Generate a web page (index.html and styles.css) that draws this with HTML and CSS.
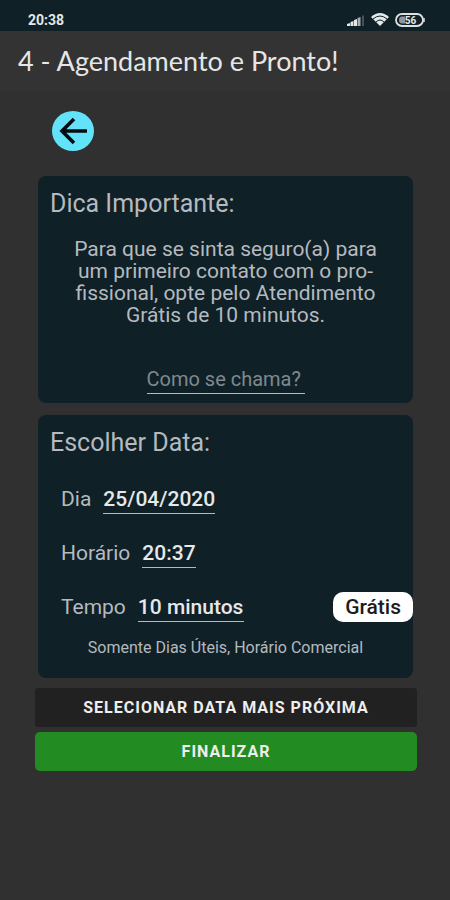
FILE: index.html
```html
<!DOCTYPE html>
<html lang="pt-BR">
<head>
<meta charset="utf-8">
<meta name="viewport" content="width=device-width, initial-scale=1">
<title>Agendamento</title>
<link rel="stylesheet" href="styles.css">
</head>
<body>
  <div class="status">
    <span class="clock">20:38</span>
    <div class="status-icons">
      <svg width="18" height="12" viewBox="0 0 18 12">
        <path d="M0 12V10L3 9V12zM3.5 12V8L6.5 7V12zM7 12V6L10 5V12z" fill="#e4e8e9"/>
        <path d="M10.5 12V4L13.5 3V12z" fill="#a5adb0"/>
        <path d="M15 12V2L17 1V12z" fill="#435157"/>
      </svg>
      <svg width="18" height="13" viewBox="0 0 18 13">
        <path d="M9 13L0 4Q9 -4 18 4z" fill="#e4e8e9"/>
        <path d="M2 6Q9 0 16 6M5 9Q9 5 13 9" fill="none" stroke="#102027" stroke-width="1"/>
      </svg>
      <svg width="30" height="14" viewBox="0 0 30 14">
        <rect x="1" y="1" width="27" height="12" rx="6" fill="none" stroke="#dde1e2" stroke-width="1.8"/>
        <path d="M10 3.5H7Q4 3.5 4 7T7 10.5H10z" fill="#8d979b"/>
        <path d="M29 5V9" stroke="#dde1e2" stroke-width="1.5"/>
        <text x="15.5" y="10.5" class="battery-level">56</text>
      </svg>
    </div>
  </div>

  <header class="app-bar">
    <h1>4 - Agendamento e Pronto!</h1>
  </header>

  <main>
    <button type="button" class="back" aria-label="Voltar">
      <svg width="42" height="40" viewBox="0 0 42 40">
        <path d="M35 20H10M22 8L10 20L22 32" fill="none" stroke="#050c0f" stroke-width="3.6"/>
      </svg>
    </button>

    <form>
      <section class="card card-tip">
        <h2>Dica Importante:</h2>
        <p class="tip">Para que se sinta seguro(a) para<br>um primeiro contato com o pro-<br>fissional, opte pelo Atendimento<br>Grátis de 10 minutos.</p>
        <input type="text" class="field name" placeholder="Como se chama?" aria-label="Como se chama?">
      </section>

      <section class="card card-date">
        <h2>Escolher Data:</h2>
        <div class="row">
          <label for="dia">Dia</label>
          <input type="text" id="dia" class="field date" value="25/04/2020">
        </div>
        <div class="row">
          <label for="horario">Horário</label>
          <input type="text" id="horario" class="field time" value="20:37">
        </div>
        <div class="row">
          <label for="tempo">Tempo</label>
          <input type="text" id="tempo" class="field length" value="10 minutos">
          <span class="badge">Grátis</span>
        </div>
        <p class="note">Somente Dias Úteis, Horário Comercial</p>
      </section>

      <div class="actions">
        <button type="button" class="btn btn-next">SELECIONAR DATA MAIS PRÓXIMA</button>
        <button type="submit" class="btn btn-finish">FINALIZAR</button>
      </div>
    </form>
  </main>
</body>
</html>
```

FILE: styles.css
```css
* {
  box-sizing: border-box;
}
body {
  margin: 0;
  min-height: 100vh;
  background: #303030;
  color: #b4babf;
  font-family: Roboto, sans-serif;
}
h1, h2, p {
  margin: 0;
}
.status {
  display: flex;
  align-items: center;
  justify-content: space-between;
  height: 31px;
  padding: 8px 25px 0 28px;
  background: #102027;
}
.clock {
  color: #e4e8e9;
  font-size: 14px;
  font-weight: 700;
}
.status-icons {
  display: flex;
  align-items: center;
  gap: 6px;
}
.battery-level {
  fill: #e4e8e9;
  font-size: 10px;
  font-weight: 700;
  text-anchor: middle;
}
.app-bar {
  height: 60px;
  padding: 0 18px;
  background: #343334;
}
h1 {
  color: #e6e6e6;
  font-family: Lato, sans-serif;
  font-size: 27px;
  font-weight: 400;
  line-height: 60px;
}
main {
  padding: 20px 33px 0 35px;
}
.back {
  display: block;
  width: 42px;
  height: 40px;
  margin: 0 0 25px 17px;
  padding: 0;
  border: 0;
  border-radius: 50%;
  background: #62e3fa;
}
.back svg {
  display: block;
}
.card {
  display: flex;
  flex-direction: column;
  margin: 0 4px 12px 3px;
  padding: 12px 0 0 12px;
  border-radius: 8px;
  background: #102027;
}
h2 {
  font-size: 25px;
  font-weight: 400;
  line-height: 32px;
}
.tip {
  margin: 18px 12px 38px 0;
  font-size: 21px;
  line-height: 22px;
  text-align: center;
}
.field {
  height: 30px;
  padding: 0;
  border: 0;
  border-bottom: 1px solid #b4babf;
  background: none;
  color: #e6e8ea;
  font: 500 21px Roboto, sans-serif;
}
.field::placeholder {
  color: #7f898e;
  opacity: 1;
}
.name {
  align-self: center;
  width: 158px;
  margin: 0 12px 9px 0;
  font-size: 20px;
  font-weight: 400;
}
.card-date {
  margin-bottom: 10px;
}
.card-date h2 {
  margin-bottom: 13px;
}
.row {
  display: flex;
  align-items: center;
  gap: 12px;
  height: 54px;
  padding-left: 11px;
  font-size: 21px;
}
.date {
  width: 112px;
}
.time {
  width: 54px;
}
.length {
  width: 106px;
}
.badge {
  margin-left: auto;
  padding: 0 12px;
  border-radius: 10px;
  background: #fff;
  color: #1c1c1c;
  font-weight: 500;
  line-height: 30px;
}
.note {
  margin: 3px 12px 19px 0;
  font-size: 16px;
  line-height: 22px;
  text-align: center;
}
.actions {
  display: flex;
  flex-direction: column;
  gap: 5px;
}
.btn {
  height: 39px;
  border: 0;
  border-radius: 5px;
  color: #eee;
  font: 700 16px Roboto, sans-serif;
  letter-spacing: 1px;
}
.btn-next {
  border-radius: 3px;
  background: #212121;
}
.btn-finish {
  background: #228b22;
}
```
